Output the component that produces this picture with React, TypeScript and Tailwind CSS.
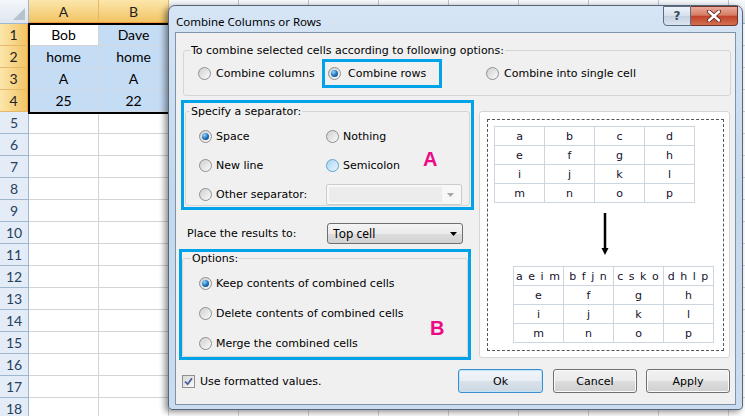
const COLS = ["A", "B", "C", "D", "E", "F", "G", "H", "I", "J", "K"];
const DATA: Record<number, string[]> = {
  1: ["Bob", "Dave"],
  2: ["home", "home"],
  3: ["A", "A"],
  4: ["25", "22"],
};
const ROWS = Array.from({ length: 18 }, (_, i) => i + 1);

const TOP = [
  ["a", "b", "c", "d"],
  ["e", "f", "g", "h"],
  ["i", "j", "k", "l"],
  ["m", "n", "o", "p"],
];
const BOTTOM = [
  ["a e i m", "b f j n", "c s k o", "d h l p"],
  ["e", "f", "g", "h"],
  ["i", "j", "k", "l"],
  ["m", "n", "o", "p"],
];

function Sheet() {
  return (
    <div className="relative h-[416px] w-[745px] overflow-hidden bg-white font-['Lato',sans-serif] text-[14px] text-black">
      {/* column headers; only A and B show, the rest sit under the dialog */}
      <div className="flex h-[24px]">
        <div className="relative w-[29px] shrink-0 border-r border-b border-[#9eb6ce] bg-[linear-gradient(180deg,#f3f6fa,#dfe6ef)]">
          <div className="absolute right-[3px] bottom-[3px] h-0 w-0 border-b-[12px] border-l-[12px] border-b-[#b7c2cf] border-l-transparent" />
        </div>
        {COLS.map((c, i) => (
          <div
            key={c}
            className={
              i < 2
                ? "flex w-[70px] shrink-0 items-center justify-center border-r border-b-2 border-r-[#e5b769] border-b-[#f29b38] bg-[linear-gradient(180deg,#fce6ab,#f2c465)] text-[#222]"
                : "flex w-[70px] shrink-0 items-center justify-center border-r border-b border-r-[#b9c4d2] border-b-[#9eb6ce] bg-[linear-gradient(180deg,#f6f8fb,#dce4ee)] text-[#27415f]"
            }
          >
            {i < 2 ? c : ""}
          </div>
        ))}
      </div>

      {ROWS.map((r) => (
        <div key={r} className="flex h-[22px]">
          <div
            className={
              r <= 4
                ? "flex w-[29px] shrink-0 items-center justify-center border-r-2 border-b border-r-[#f29b38] border-b-[#e5b769] bg-[linear-gradient(90deg,#fce6ab,#f2c465)] text-[#222]"
                : "flex w-[29px] shrink-0 items-center justify-center border-r border-b border-r-[#9eb6ce] border-b-[#9eb6ce] bg-[#e4ecf7] text-[#27415f]"
            }
          >
            {r}
          </div>
          {COLS.map((c, i) => {
            const sel = r <= 4 && i < 2;
            const active = r === 1 && i === 0;
            return (
              <div
                key={c}
                className={
                  sel && !active
                    ? "flex w-[70px] shrink-0 items-center justify-center border-r border-b border-[#d0d7e0] bg-[#c5dcf5]"
                    : "flex w-[70px] shrink-0 items-center justify-center border-r border-b border-[#d4d4d4] bg-white"
                }
              >
                {sel ? DATA[r][i] : ""}
              </div>
            );
          })}
        </div>
      ))}

      {/* selection outline A1:B4 */}
      <div className="pointer-events-none absolute top-[23px] left-[28px] h-[91px] w-[142px] border-2 border-black" />
    </div>
  );
}

function Radio({ on = false, hot = false }: { on?: boolean; hot?: boolean }) {
  return (
    <span
      className={
        hot
          ? "flex h-[13px] w-[13px] shrink-0 items-center justify-center rounded-full border border-[#5fa3cf] bg-[linear-gradient(135deg,#a9d6f2,#e9f6fe)]"
          : "flex h-[13px] w-[13px] shrink-0 items-center justify-center rounded-full border border-[#8f8f8f] bg-[linear-gradient(135deg,#cfcfcf,#fbfbfb)]"
      }
    >
      {on && (
        <span className="h-[7px] w-[7px] rounded-full bg-[radial-gradient(circle_at_35%_30%,#8fd6ff,#1c6fb4_55%,#0d3f73)]" />
      )}
    </span>
  );
}

function Grid({ rows, spaced = false }: { rows: string[][]; spaced?: boolean }) {
  return (
    <div className="grid w-[201px] grid-cols-4 border-t border-l border-[#cdd5e1] text-[11px] text-[#12122e]">
      {rows.flatMap((row, ri) =>
        row.map((v, ci) => (
          <div
            key={`${ri}-${ci}`}
            className={
              spaced && ri === 0
                ? "flex h-[19px] items-center justify-center border-r border-b border-[#cdd5e1] tracking-[1px] whitespace-pre"
                : "flex h-[19px] items-center justify-center border-r border-b border-[#cdd5e1]"
            }
          >
            {v}
          </div>
        ))
      )}
    </div>
  );
}

function Button({ label, focus = false, w }: { label: string; focus?: boolean; w: string }) {
  return (
    <div
      className={
        focus
          ? `flex h-[24px] items-center justify-center rounded-[3px] border border-[#3c8fce] bg-[linear-gradient(180deg,#f1f5f9_0%,#e8eef4_50%,#d9e2eb_51%,#cdd8e3_100%)] shadow-[inset_0_0_0_1px_#bfe3f8] ${w}`
          : `flex h-[24px] items-center justify-center rounded-[3px] border border-[#707070] bg-[linear-gradient(180deg,#f2f2f2_0%,#ebebeb_50%,#dddddd_51%,#cfcfcf_100%)] shadow-[inset_0_0_0_1px_#fbfbfb] ${w}`
      }
    >
      {label}
    </div>
  );
}

function Dialog() {
  return (
    <div className="absolute top-[5px] left-[168px] flex h-[405px] w-[575px] flex-col rounded-t-[7px] rounded-b-[4px] border border-[#56667a] bg-[linear-gradient(180deg,#d6e5f5_0%,#c4d8ed_45%,#cadcef_100%)] shadow-[-3px_2px_6px_rgba(0,0,0,0.45)]">
      {/* title bar */}
      <div className="flex h-[26px] shrink-0 items-start">
        <div className="pt-[8px] pl-[7px] font-['Noto_Sans',sans-serif] text-[11.5px] leading-[16px] text-black">
          Combine Columns or Rows
        </div>
        <div className="mr-[4px] ml-auto flex">
          <div className="flex h-[20px] w-[28px] items-center justify-center rounded-bl-[4px] border border-[#5c6d82] bg-[linear-gradient(180deg,#eef3f9,#d5e0ec_50%,#c3d1e1_51%,#dbe5f0)] font-['DejaVu_Sans',sans-serif] text-[12px] font-bold text-[#3b4a5c]">
            ?
          </div>
          <div className="flex h-[20px] w-[47px] items-center justify-center rounded-br-[4px] border border-l-0 border-[#6f3429] bg-[linear-gradient(180deg,#eaab9c,#d67d66_45%,#c2432b_52%,#d2714f_100%)]">
            <svg width="16" height="12" viewBox="0 0 16 12">
              <path d="M3 1.5 L13 10.5 M13 1.5 L3 10.5" stroke="#5a2a22" strokeWidth="4.2" strokeLinecap="round" />
              <path d="M3 1.5 L13 10.5 M13 1.5 L3 10.5" stroke="#ffffff" strokeWidth="2.4" strokeLinecap="round" />
            </svg>
          </div>
        </div>
      </div>

      {/* client area */}
      <div className="mr-[6px] mb-[4px] ml-[6px] flex flex-1 flex-col border border-[#7f93a8] bg-[#f0f0f0] font-['DejaVu_Sans',sans-serif] text-[11px] leading-[13px] text-black">
        {/* combine mode */}
        <fieldset className="mt-[11px] mr-[4px] ml-[7px] h-[52px] rounded-[3px] border border-[#d5d5d5]">
          <legend className="ml-[6px] px-[1px] leading-[13px]">To combine selected cells according to following options:</legend>
          <div className="mt-[2px] flex h-[29px] items-center">
            <div className="ml-[14px] flex w-[124px] items-center gap-[5px]">
              <Radio />
              <span>Combine columns</span>
            </div>
            <div className="flex h-[29px] w-[120px] items-center gap-[7px] border-[3px] border-[#00a2e8] pl-[3px]">
              <Radio on />
              <span>Combine rows</span>
            </div>
            <div className="ml-[44px] flex items-center gap-[5px]">
              <Radio />
              <span>Combine into single cell</span>
            </div>
          </div>
        </fieldset>

        <div className="flex items-start">
          {/* left column */}
          <div className="ml-[3px] flex w-[295px] flex-col">
            <div className="mt-[4px] ml-[2px] h-[110px] w-[293px] border-[3px] border-[#00a2e8]">
              <fieldset className="relative mx-[1px] mt-[2px] h-[101px] rounded-[3px] border border-[#d5d5d5]">
                <legend className="ml-[4px] px-[1px] leading-[13px]">Specify a separator:</legend>
                <div className="grid grid-cols-[127px_1fr] gap-y-[9px] pt-[8px] pl-[13px]">
                  <div className="flex h-[20px] items-center gap-[4px]">
                    <Radio on />
                    <span>Space</span>
                  </div>
                  <div className="flex h-[20px] items-center gap-[4px]">
                    <Radio />
                    <span>Nothing</span>
                  </div>
                  <div className="flex h-[20px] items-center gap-[4px]">
                    <Radio />
                    <span>New line</span>
                  </div>
                  <div className="flex h-[20px] items-center gap-[4px]">
                    <Radio hot />
                    <span>Semicolon</span>
                  </div>
                  <div className="flex h-[20px] items-center gap-[4px]">
                    <Radio />
                    <span>Other separator:</span>
                  </div>
                  <div className="flex h-[21px] w-[136px] items-center rounded-[2px] border border-[#cdcdcd] bg-[#f7f7f7] p-[2px]">
                    <div className="h-full flex-1 bg-[#ececec]" />
                    <svg className="mx-[5px]" width="7" height="4" viewBox="0 0 7 4">
                      <path d="M0 0 L7 0 L3.5 4 Z" fill="#a7a7a7" />
                    </svg>
                  </div>
                </div>
                <span className="absolute top-[31px] left-[237px] font-['Liberation_Sans',sans-serif] text-[20px] leading-[20px] font-bold text-[#ec0b87]">
                  A
                </span>
              </fieldset>
            </div>

            <div className="mt-[13px] flex h-[21px] items-center">
              <span className="w-[148px] pl-[8px]">Place the results to:</span>
              <div className="flex h-[21px] w-[136px] items-center rounded-[3px] border border-[#707070] bg-[linear-gradient(180deg,#f4f4f4_0%,#ebebeb_50%,#dddddd_51%,#d2d2d2_100%)] pl-[5px] font-['Noto_Sans',sans-serif] text-[12px]">
                <span className="flex-1">Top cell</span>
                <svg className="mr-[5px]" width="7" height="4" viewBox="0 0 7 4">
                  <path d="M0 0 L7 0 L3.5 4 Z" fill="#000" />
                </svg>
              </div>
            </div>

            <div className="mt-[5px] h-[111px] w-[292px] border-[3px] border-[#00a2e8]">
              <fieldset className="relative h-full rounded-[3px] border border-[#d5d5d5]">
                <legend className="ml-[8px] px-[1px] leading-[13px]">Options:</legend>
                <div className="flex flex-col gap-[10px] pt-[8px] pl-[16px]">
                  <div className="flex h-[20px] items-center gap-[4px]">
                    <Radio on />
                    <span>Keep contents of combined cells</span>
                  </div>
                  <div className="flex h-[20px] items-center gap-[4px]">
                    <Radio />
                    <span>Delete contents of combined cells</span>
                  </div>
                  <div className="flex h-[20px] items-center gap-[4px]">
                    <Radio />
                    <span>Merge the combined cells</span>
                  </div>
                </div>
                <span className="absolute top-[53px] left-[247px] font-['Liberation_Sans',sans-serif] text-[20px] leading-[20px] font-bold text-[#ec0b87]">
                  B
                </span>
              </fieldset>
            </div>
          </div>

          {/* preview */}
          <div className="mt-[15px] ml-[5px] h-[247px] w-[251px] rounded-[3px] border border-[#d5d5d5] bg-white">
            <div className="mt-[7px] ml-[7px] flex h-[232px] w-[237px] flex-col border border-dashed border-[#555]">
              <div className="mt-[6px] ml-[6px]">
                <Grid rows={TOP} />
              </div>
              <svg className="mt-[10px] ml-[112px]" width="10" height="42" viewBox="0 0 10 42">
                <path d="M5 0 L5 37" stroke="#000" strokeWidth="2.5" />
                <path d="M1.5 35 L8.5 35 L5 42 Z" fill="#000" />
              </svg>
              <div className="mt-[11px] ml-[25px]">
                <Grid rows={BOTTOM} spaced />
              </div>
            </div>
          </div>
        </div>

        {/* footer */}
        <div className="mt-[9px] flex h-[24px] items-center">
          <span className="ml-[6px] flex h-[13px] w-[13px] items-center justify-center border border-[#8e8f8f] bg-[linear-gradient(135deg,#d6d6d6,#fbfbfb)]">
            <svg width="9" height="9" viewBox="0 0 9 9">
              <path d="M1 4.5 L3.6 7.2 L8 1.2" stroke="#4b5d98" strokeWidth="1.8" fill="none" />
            </svg>
          </span>
          <span className="ml-[5px]">Use formatted values.</span>
          <div className="mr-[5px] ml-auto flex">
            <Button label="Ok" focus w="mr-[10px] w-[85px]" />
            <Button label="Cancel" w="mr-[9px] w-[84px]" />
            <Button label="Apply" w="w-[84px]" />
          </div>
        </div>
      </div>
    </div>
  );
}

export default function App() {
  return (
    <div className="relative h-[416px] w-[745px] overflow-hidden">
      <Sheet />
      <Dialog />
    </div>
  );
}
